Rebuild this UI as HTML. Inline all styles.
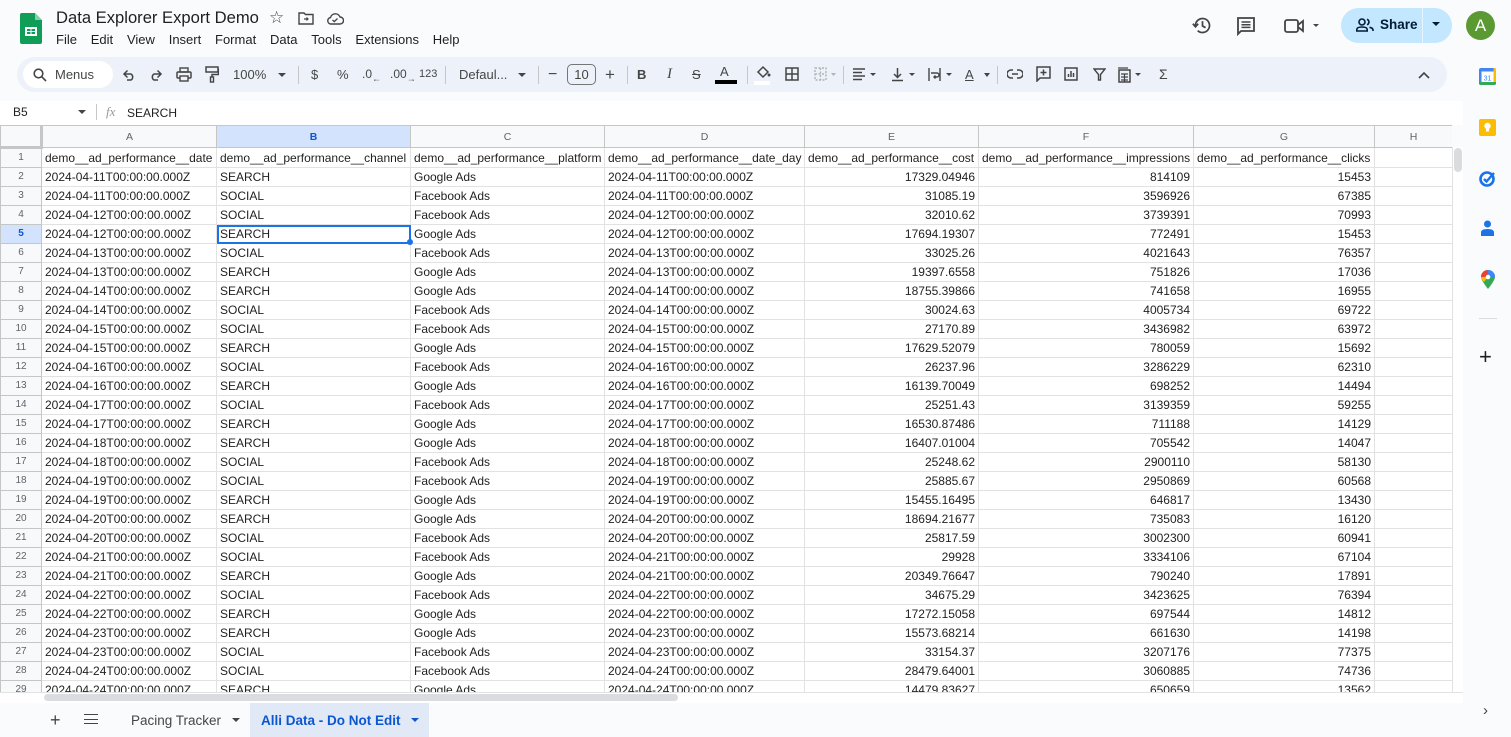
<!DOCTYPE html>
<html><head><meta charset="utf-8"><style>
*{box-sizing:border-box;margin:0;padding:0}
body{width:1511px;height:737px;overflow:hidden;background:#f9fbfd;font-family:"Liberation Sans",Arial,sans-serif;color:#1f1f1f;position:relative}
.abs{position:absolute}
.menu span{margin-right:13.8px}
.tb{position:absolute;left:17px;top:57px;width:1430px;height:35px;background:#edf2fa;border-radius:18px}
.ic{position:absolute;top:0;height:35px;line-height:35px;font-size:13px;color:#444746}
.sep{position:absolute;top:9px;width:1px;height:18px;background:#c7c7c7}
#grid{position:absolute;left:0;top:125px;width:1452px;height:567px;overflow:hidden;background:#fff}
table{border-collapse:collapse;table-layout:fixed;width:1452px;font-size:12px}
td{height:19px;border:1px solid #e2e2e2;padding:0 3px;white-space:nowrap;overflow:hidden;line-height:18px}
td.r{text-align:right}
td.h{background:#f8f9fa;color:#5f6368;text-align:center;font-size:10px;border-color:#c4c7c5;padding:0}
tr.ch td{height:22px;background:#f8f9fa;color:#5f6368;text-align:center;font-size:10.5px;border-color:#c4c7c5}
</style></head><body>
<svg class="abs" style="left:20px;top:13px" width="22" height="31" viewBox="0 0 22 31"><path d="M0 2Q0 0 2 0H15L22 7V29Q22 31 20 31H2Q0 31 0 29Z" fill="#0f9d58"/><path d="M15 0V7H22Z" fill="#87ceac"/><rect x="5" y="14" width="12" height="9" fill="#fff"/><rect x="7" y="16" width="3.5" height="2" fill="#0f9d58"/><rect x="11.5" y="16" width="3.5" height="2" fill="#0f9d58"/><rect x="7" y="19" width="3.5" height="2" fill="#0f9d58"/><rect x="11.5" y="19" width="3.5" height="2" fill="#0f9d58"/></svg>
<div class="abs" style="left:56px;top:8px;font-size:16.6px;color:#1f1f1f">Data Explorer Export Demo</div>
<div class="abs" style="left:269px;top:8px;font-size:17px;color:#444">☆</div>
<svg class="abs" style="left:298px;top:12px" width="16" height="13" viewBox="0 0 16 13"><path d="M1 1H6L7.5 2.5H15V12H1Z" fill="none" stroke="#444" stroke-width="1.4"/><path d="M6 7H10M8.5 5.5L10 7 8.5 8.5" stroke="#444" stroke-width="1.2" fill="none"/></svg>
<svg class="abs" style="left:326px;top:12px" width="18" height="13" viewBox="0 0 18 13"><path d="M4.5 12H14A3.5 3.5 0 0 0 14 5 5 5 0 0 0 4.5 5.5 3.3 3.3 0 0 0 4.5 12Z" fill="none" stroke="#444" stroke-width="1.4"/><path d="M6.5 8L8.3 9.6 11.5 6.5" stroke="#444" stroke-width="1.3" fill="none"/></svg>
<div class="abs menu" style="left:56px;top:32px;font-size:13px;color:#1f1f1f"><span>File</span><span>Edit</span><span>View</span><span>Insert</span><span>Format</span><span>Data</span><span>Tools</span><span>Extensions</span><span>Help</span></div>
<svg class="abs" style="left:1192px;top:15px" width="21" height="21" viewBox="0 0 24 24"><path d="M4 12A8 8 0 1 1 6.5 17.8" fill="none" stroke="#444" stroke-width="2"/><path d="M1 10L4 13.5 7 10" fill="none" stroke="#444" stroke-width="2"/><path d="M12 7V12.5L15.5 14.5" fill="none" stroke="#444" stroke-width="2"/></svg>
<svg class="abs" style="left:1236px;top:16px" width="20" height="20" viewBox="0 0 20 20"><path d="M2 2H18V15H5L2 18Z" fill="none" stroke="#444" stroke-width="1.8"/><path d="M5.5 6H14.5M5.5 8.7H14.5M5.5 11.4H14.5" stroke="#444" stroke-width="1.5"/></svg>
<svg class="abs" style="left:1284px;top:17px" width="40" height="18" viewBox="0 0 40 18"><rect x="1" y="3" width="13" height="12" rx="2" fill="none" stroke="#444" stroke-width="1.8"/><path d="M14 8L19 4V14L14 10" fill="none" stroke="#444" stroke-width="1.8"/><path d="M29 7H35L32 10Z" fill="#444"/></svg>
<div class="abs" style="left:1341px;top:8px;width:111px;height:35px;border-radius:18px;background:#c2e7ff"></div>
<div class="abs" style="left:1422px;top:8px;width:1px;height:35px;background:#e6f4ff"></div>
<svg class="abs" style="left:1356px;top:18px" width="18" height="14" viewBox="0 0 18 14"><circle cx="6" cy="4" r="3" fill="none" stroke="#001d35" stroke-width="1.6"/><path d="M0.8 13V11.5Q0.8 9 6 9 11.2 9 11.2 11.5V13Z" fill="none" stroke="#001d35" stroke-width="1.6"/><path d="M11 1.2A3 3 0 0 1 11 6.8M13.5 9.3Q17 10 17 12V13" fill="none" stroke="#001d35" stroke-width="1.6"/></svg>
<div class="abs" style="left:1380px;top:17px;font-size:13.5px;font-weight:bold;color:#001d35">Share</div>
<div class="abs" style="left:1432px;top:22px;width:0;height:0;border-left:4px solid transparent;border-right:4px solid transparent;border-top:4px solid #001d35"></div>
<div class="abs" style="left:1466px;top:11px;width:29px;height:29px;border-radius:50%;background:#5b9a32;color:#fff;text-align:center;line-height:29px;font-size:17px">A</div>
<div class="tb">
<div class="abs" style="left:6px;top:4px;width:90px;height:27px;background:#fff;border-radius:14px"></div>
<svg class="abs" style="left:16px;top:11px" width="14" height="14" viewBox="0 0 14 14"><circle cx="5.5" cy="5.5" r="4.3" fill="none" stroke="#444" stroke-width="1.6"/><path d="M8.7 8.7L13 13" stroke="#444" stroke-width="1.6"/></svg>
<div class="ic" style="left:38px;color:#444746">Menus</div>
<svg class="abs" style="left:105px;top:12px" width="14" height="12" viewBox="0 0 14 12"><path d="M3 5H9A3.5 3.5 0 0 1 9 11H5M5.5 1.5L2 5 5.5 8.5" fill="none" stroke="#444" stroke-width="1.5"/></svg>
<svg class="abs" style="left:132px;top:12px" width="14" height="12" viewBox="0 0 14 12"><path d="M11 5H5A3.5 3.5 0 0 0 5 11H9M8.5 1.5L12 5 8.5 8.5" fill="none" stroke="#444" stroke-width="1.5"/></svg>
<svg class="abs" style="left:159px;top:10px" width="16" height="15" viewBox="0 0 16 15"><rect x="1" y="5" width="14" height="6" rx="1" fill="none" stroke="#444" stroke-width="1.5"/><rect x="4" y="1" width="8" height="4" fill="none" stroke="#444" stroke-width="1.4"/><rect x="4" y="9" width="8" height="5" fill="#edf2fa" stroke="#444" stroke-width="1.4"/></svg>
<svg class="abs" style="left:188px;top:9px" width="14" height="17" viewBox="0 0 14 17"><rect x="1" y="1" width="12" height="5" fill="none" stroke="#444" stroke-width="1.5"/><path d="M13 3.5H13.5V8.5H7V11" fill="none" stroke="#444" stroke-width="1.5"/><rect x="5.5" y="11" width="3" height="5" fill="none" stroke="#444" stroke-width="1.4"/></svg>
<div class="ic" style="left:216px">100%</div>
<div class="abs" style="left:261px;top:16px;border-left:4px solid transparent;border-right:4px solid transparent;border-top:4px solid #444"></div>
<div class="sep" style="left:281px"></div>
<div class="ic" style="left:294px">$</div>
<div class="ic" style="left:320px">%</div>
<div class="ic" style="left:345px;font-size:12px">.0<sub style="font-size:9px">←</sub></div>
<div class="ic" style="left:373px;font-size:12px">.00<sub style="font-size:9px">→</sub></div>
<div class="ic" style="left:402px;font-size:11px">123</div>
<div class="sep" style="left:428px"></div>
<div class="ic" style="left:442px">Defaul...</div>
<div class="abs" style="left:501px;top:16px;border-left:4px solid transparent;border-right:4px solid transparent;border-top:4px solid #444"></div>
<div class="sep" style="left:521px"></div>
<div class="ic" style="left:531px;font-size:16px">−</div>
<div class="abs" style="left:550px;top:7px;width:29px;height:21px;border:1px solid #747775;border-radius:5px;text-align:center;line-height:19px;font-size:13px;color:#444">10</div>
<div class="ic" style="left:588px;font-size:17px">+</div>
<div class="sep" style="left:610px"></div>
<div class="ic" style="left:620px;font-weight:bold">B</div>
<div class="ic" style="left:650px;font-style:italic;font-family:'Liberation Serif',serif;font-size:15px">I</div>
<div class="ic" style="left:675px;text-decoration:line-through">S</div>
<div class="ic" style="left:703px;top:-3px">A</div>
<div class="abs" style="left:698px;top:23px;width:22px;height:4px;background:#000"></div>
<div class="sep" style="left:730px"></div>
<svg class="abs" style="left:738px;top:8px" width="16" height="14" viewBox="0 0 16 14"><path d="M3 7L8 2 13 7 8 12Z" fill="none" stroke="#444" stroke-width="1.5"/><circle cx="14" cy="10" r="1.5" fill="#444"/></svg>
<div class="abs" style="left:737px;top:24px;width:16px;height:4px;background:#fff"></div>
<svg class="abs" style="left:768px;top:10px" width="14" height="14" viewBox="0 0 14 14"><rect x="1" y="1" width="12" height="12" fill="none" stroke="#444" stroke-width="1.5"/><path d="M7 1V13M1 7H13" stroke="#444" stroke-width="1.5"/></svg>
<svg class="abs" style="left:797px;top:10px" width="24" height="14" viewBox="0 0 24 14"><path d="M1 1H12V13H1ZM6.5 1V13M1 7H12" fill="none" stroke="#b0b3b8" stroke-width="1.4" stroke-dasharray="2 1.5"/><path d="M17 6H22L19.5 9Z" fill="#b0b3b8"/></svg>
<div class="sep" style="left:826px"></div>
<svg class="abs" style="left:835px;top:11px" width="30" height="14" viewBox="0 0 30 14"><path d="M1 1H13M1 4.5H10M1 8H13M1 11.5H10" stroke="#444" stroke-width="1.5"/><path d="M18 5H24L21 8Z" fill="#444"/></svg>
<svg class="abs" style="left:874px;top:10px" width="30" height="15" viewBox="0 0 30 15"><path d="M6.5 1V10M3 7L6.5 10.5 10 7M1 13.5H12" fill="none" stroke="#444" stroke-width="1.5"/><path d="M18 6H24L21 9Z" fill="#444"/></svg>
<svg class="abs" style="left:911px;top:10px" width="30" height="15" viewBox="0 0 30 15"><path d="M1 1V14M12 1V14M3 6H9A2 2 0 0 1 9 10H6M7.5 8.5L6 10 7.5 11.5" fill="none" stroke="#444" stroke-width="1.4"/><path d="M18 6H24L21 9Z" fill="#444"/></svg>
<div class="ic" style="left:948px;text-decoration:underline">A</div>
<div class="abs" style="left:967px;top:16px;border-left:3px solid transparent;border-right:3px solid transparent;border-top:4px solid #444"></div>
<div class="sep" style="left:980px"></div>
<svg class="abs" style="left:990px;top:12px" width="16" height="10" viewBox="0 0 16 10"><path d="M6 1H4A4 4 0 0 0 4 9H6M10 1H12A4 4 0 0 1 12 9H10M5 5H11" fill="none" stroke="#444" stroke-width="1.5"/></svg>
<svg class="abs" style="left:1019px;top:9px" width="15" height="16" viewBox="0 0 15 16"><path d="M1 1H14V12H4L1 15Z" fill="none" stroke="#444" stroke-width="1.5"/><path d="M7.5 3.5V9.5M4.5 6.5H10.5" stroke="#444" stroke-width="1.5"/></svg>
<svg class="abs" style="left:1047px;top:10px" width="14" height="14" viewBox="0 0 14 14"><rect x="1" y="1" width="12" height="12" fill="none" stroke="#444" stroke-width="1.5"/><path d="M4.5 10V7M7 10V4M9.5 10V6" stroke="#444" stroke-width="1.5"/></svg>
<svg class="abs" style="left:1076px;top:11px" width="13" height="13" viewBox="0 0 13 13"><path d="M1 1H12L7.5 6.5V12H5.5V6.5Z" fill="none" stroke="#444" stroke-width="1.4"/></svg>
<svg class="abs" style="left:1100px;top:10px" width="30" height="16" viewBox="0 0 30 16"><rect x="2" y="3" width="11" height="12" fill="none" stroke="#444" stroke-width="1.5"/><path d="M1 1H11M4 7H11M4 10H11M4 13H11M7.5 7V15" stroke="#444" stroke-width="1.2"/><path d="M18 6H24L21 9Z" fill="#444"/></svg>
<div class="ic" style="left:1142px;font-size:14px">Σ</div>
<svg class="abs" style="left:1401px;top:14px" width="12" height="8" viewBox="0 0 12 8"><path d="M1 7L6 2 11 7" fill="none" stroke="#444" stroke-width="1.6"/></svg>
</div>
<div class="abs" style="left:0;top:101px;width:1463px;height:24px;background:#fff"></div>
<div class="abs" style="left:13px;top:105px;font-size:12px">B5</div>
<div class="abs" style="left:78px;top:110px;border-left:4px solid transparent;border-right:4px solid transparent;border-top:4px solid #444"></div>
<div class="abs" style="left:96px;top:104px;width:1px;height:16px;background:#c7c7c7"></div>
<div class="abs" style="left:106px;top:104px;font-size:13px;font-style:italic;font-family:'Liberation Serif',serif;color:#999">fx</div>
<div class="abs" style="left:127px;top:106px;font-size:12px">SEARCH</div>
<div id="grid">
<table>
<colgroup><col style="width:41px"><col style="width:175px"><col style="width:194px"><col style="width:194px"><col style="width:200px"><col style="width:174px"><col style="width:215px"><col style="width:181px"><col style="width:78px"></colgroup>
<tr class="ch"><td style="border-right:3px solid #c4c7c5;border-bottom:3px solid #c4c7c5"></td><td>A</td><td style="background:#d3e3fd;color:#0b57d0;font-weight:bold">B</td><td>C</td><td>D</td><td>E</td><td>F</td><td>G</td><td>H</td></tr>
<tr><td class="h">1</td><td>demo__ad_performance__date</td><td>demo__ad_performance__channel</td><td>demo__ad_performance__platform</td><td>demo__ad_performance__date_day</td><td>demo__ad_performance__cost</td><td>demo__ad_performance__impressions</td><td>demo__ad_performance__clicks</td><td></td></tr>
<tr><td class="h">2</td><td>2024-04-11T00:00:00.000Z</td><td>SEARCH</td><td>Google Ads</td><td>2024-04-11T00:00:00.000Z</td><td class="r">17329.04946</td><td class="r">814109</td><td class="r">15453</td><td></td></tr>
<tr><td class="h">3</td><td>2024-04-11T00:00:00.000Z</td><td>SOCIAL</td><td>Facebook Ads</td><td>2024-04-11T00:00:00.000Z</td><td class="r">31085.19</td><td class="r">3596926</td><td class="r">67385</td><td></td></tr>
<tr><td class="h">4</td><td>2024-04-12T00:00:00.000Z</td><td>SOCIAL</td><td>Facebook Ads</td><td>2024-04-12T00:00:00.000Z</td><td class="r">32010.62</td><td class="r">3739391</td><td class="r">70993</td><td></td></tr>
<tr><td class="h" style="background:#d3e3fd;color:#0b57d0;font-weight:bold">5</td><td>2024-04-12T00:00:00.000Z</td><td style="outline:2px solid #1a73e8;outline-offset:-2px">SEARCH</td><td>Google Ads</td><td>2024-04-12T00:00:00.000Z</td><td class="r">17694.19307</td><td class="r">772491</td><td class="r">15453</td><td></td></tr>
<tr><td class="h">6</td><td>2024-04-13T00:00:00.000Z</td><td>SOCIAL</td><td>Facebook Ads</td><td>2024-04-13T00:00:00.000Z</td><td class="r">33025.26</td><td class="r">4021643</td><td class="r">76357</td><td></td></tr>
<tr><td class="h">7</td><td>2024-04-13T00:00:00.000Z</td><td>SEARCH</td><td>Google Ads</td><td>2024-04-13T00:00:00.000Z</td><td class="r">19397.6558</td><td class="r">751826</td><td class="r">17036</td><td></td></tr>
<tr><td class="h">8</td><td>2024-04-14T00:00:00.000Z</td><td>SEARCH</td><td>Google Ads</td><td>2024-04-14T00:00:00.000Z</td><td class="r">18755.39866</td><td class="r">741658</td><td class="r">16955</td><td></td></tr>
<tr><td class="h">9</td><td>2024-04-14T00:00:00.000Z</td><td>SOCIAL</td><td>Facebook Ads</td><td>2024-04-14T00:00:00.000Z</td><td class="r">30024.63</td><td class="r">4005734</td><td class="r">69722</td><td></td></tr>
<tr><td class="h">10</td><td>2024-04-15T00:00:00.000Z</td><td>SOCIAL</td><td>Facebook Ads</td><td>2024-04-15T00:00:00.000Z</td><td class="r">27170.89</td><td class="r">3436982</td><td class="r">63972</td><td></td></tr>
<tr><td class="h">11</td><td>2024-04-15T00:00:00.000Z</td><td>SEARCH</td><td>Google Ads</td><td>2024-04-15T00:00:00.000Z</td><td class="r">17629.52079</td><td class="r">780059</td><td class="r">15692</td><td></td></tr>
<tr><td class="h">12</td><td>2024-04-16T00:00:00.000Z</td><td>SOCIAL</td><td>Facebook Ads</td><td>2024-04-16T00:00:00.000Z</td><td class="r">26237.96</td><td class="r">3286229</td><td class="r">62310</td><td></td></tr>
<tr><td class="h">13</td><td>2024-04-16T00:00:00.000Z</td><td>SEARCH</td><td>Google Ads</td><td>2024-04-16T00:00:00.000Z</td><td class="r">16139.70049</td><td class="r">698252</td><td class="r">14494</td><td></td></tr>
<tr><td class="h">14</td><td>2024-04-17T00:00:00.000Z</td><td>SOCIAL</td><td>Facebook Ads</td><td>2024-04-17T00:00:00.000Z</td><td class="r">25251.43</td><td class="r">3139359</td><td class="r">59255</td><td></td></tr>
<tr><td class="h">15</td><td>2024-04-17T00:00:00.000Z</td><td>SEARCH</td><td>Google Ads</td><td>2024-04-17T00:00:00.000Z</td><td class="r">16530.87486</td><td class="r">711188</td><td class="r">14129</td><td></td></tr>
<tr><td class="h">16</td><td>2024-04-18T00:00:00.000Z</td><td>SEARCH</td><td>Google Ads</td><td>2024-04-18T00:00:00.000Z</td><td class="r">16407.01004</td><td class="r">705542</td><td class="r">14047</td><td></td></tr>
<tr><td class="h">17</td><td>2024-04-18T00:00:00.000Z</td><td>SOCIAL</td><td>Facebook Ads</td><td>2024-04-18T00:00:00.000Z</td><td class="r">25248.62</td><td class="r">2900110</td><td class="r">58130</td><td></td></tr>
<tr><td class="h">18</td><td>2024-04-19T00:00:00.000Z</td><td>SOCIAL</td><td>Facebook Ads</td><td>2024-04-19T00:00:00.000Z</td><td class="r">25885.67</td><td class="r">2950869</td><td class="r">60568</td><td></td></tr>
<tr><td class="h">19</td><td>2024-04-19T00:00:00.000Z</td><td>SEARCH</td><td>Google Ads</td><td>2024-04-19T00:00:00.000Z</td><td class="r">15455.16495</td><td class="r">646817</td><td class="r">13430</td><td></td></tr>
<tr><td class="h">20</td><td>2024-04-20T00:00:00.000Z</td><td>SEARCH</td><td>Google Ads</td><td>2024-04-20T00:00:00.000Z</td><td class="r">18694.21677</td><td class="r">735083</td><td class="r">16120</td><td></td></tr>
<tr><td class="h">21</td><td>2024-04-20T00:00:00.000Z</td><td>SOCIAL</td><td>Facebook Ads</td><td>2024-04-20T00:00:00.000Z</td><td class="r">25817.59</td><td class="r">3002300</td><td class="r">60941</td><td></td></tr>
<tr><td class="h">22</td><td>2024-04-21T00:00:00.000Z</td><td>SOCIAL</td><td>Facebook Ads</td><td>2024-04-21T00:00:00.000Z</td><td class="r">29928</td><td class="r">3334106</td><td class="r">67104</td><td></td></tr>
<tr><td class="h">23</td><td>2024-04-21T00:00:00.000Z</td><td>SEARCH</td><td>Google Ads</td><td>2024-04-21T00:00:00.000Z</td><td class="r">20349.76647</td><td class="r">790240</td><td class="r">17891</td><td></td></tr>
<tr><td class="h">24</td><td>2024-04-22T00:00:00.000Z</td><td>SOCIAL</td><td>Facebook Ads</td><td>2024-04-22T00:00:00.000Z</td><td class="r">34675.29</td><td class="r">3423625</td><td class="r">76394</td><td></td></tr>
<tr><td class="h">25</td><td>2024-04-22T00:00:00.000Z</td><td>SEARCH</td><td>Google Ads</td><td>2024-04-22T00:00:00.000Z</td><td class="r">17272.15058</td><td class="r">697544</td><td class="r">14812</td><td></td></tr>
<tr><td class="h">26</td><td>2024-04-23T00:00:00.000Z</td><td>SEARCH</td><td>Google Ads</td><td>2024-04-23T00:00:00.000Z</td><td class="r">15573.68214</td><td class="r">661630</td><td class="r">14198</td><td></td></tr>
<tr><td class="h">27</td><td>2024-04-23T00:00:00.000Z</td><td>SOCIAL</td><td>Facebook Ads</td><td>2024-04-23T00:00:00.000Z</td><td class="r">33154.37</td><td class="r">3207176</td><td class="r">77375</td><td></td></tr>
<tr><td class="h">28</td><td>2024-04-24T00:00:00.000Z</td><td>SOCIAL</td><td>Facebook Ads</td><td>2024-04-24T00:00:00.000Z</td><td class="r">28479.64001</td><td class="r">3060885</td><td class="r">74736</td><td></td></tr>
<tr><td class="h">29</td><td>2024-04-24T00:00:00.000Z</td><td>SEARCH</td><td>Google Ads</td><td>2024-04-24T00:00:00.000Z</td><td class="r">14479.83627</td><td class="r">650659</td><td class="r">13562</td><td></td></tr>
</table>
</div>
<div class="abs" style="left:407px;top:239px;width:6px;height:6px;border-radius:50%;background:#1a73e8"></div>
<div class="abs" style="left:1452px;top:147px;width:11px;height:545px;background:#fff;border-left:1px solid #e2e2e2"></div>
<div class="abs" style="left:1454px;top:148px;width:8px;height:24px;border-radius:4px;background:#dadce0"></div>
<div class="abs" style="left:0;top:692px;width:1463px;height:11px;background:#fff;border-top:1px solid #e2e2e2"></div>
<div class="abs" style="left:44px;top:694px;width:634px;height:7px;border-radius:4px;background:#dadce0"></div>
<div class="abs" style="left:50px;top:710px;font-size:18px;color:#444">+</div>
<div class="abs" style="left:84px;top:714px;width:14px;height:10px;border-top:1.5px solid #444;border-bottom:1.5px solid #444"></div>
<div class="abs" style="left:84px;top:718.5px;width:14px;height:1.5px;background:#444"></div>
<div class="abs" style="left:131px;top:713px;font-size:13.5px;color:#444746">Pacing Tracker</div>
<div class="abs" style="left:232px;top:718px;border-left:4px solid transparent;border-right:4px solid transparent;border-top:4px solid #444"></div>
<div class="abs" style="left:250px;top:703px;width:179px;height:34px;background:#e1e9f7"></div>
<div class="abs" style="left:261px;top:713px;font-size:13.5px;font-weight:bold;color:#0b57d0">Alli Data - Do Not Edit</div>
<div class="abs" style="left:411px;top:718px;border-left:4px solid transparent;border-right:4px solid transparent;border-top:4px solid #0b57d0"></div>
<div class="abs" style="left:1483px;top:702px;font-size:15px;color:#444">›</div>
<svg class="abs" style="left:1479px;top:68px" width="17" height="17" viewBox="0 0 17 17"><rect x="0" y="0" width="17" height="17" rx="2" fill="#4285f4"/><rect x="2.5" y="3.5" width="12" height="11" fill="#fff"/><path d="M0 14H17V15Q17 17 15 17H2Q0 17 0 15Z" fill="#34a853"/><path d="M14.5 0H15Q17 0 17 2V14H14.5Z" fill="#fbbc04"/><text x="8.5" y="12.5" font-size="7" text-anchor="middle" fill="#4285f4" font-family="Liberation Sans">31</text></svg>
<svg class="abs" style="left:1479px;top:119px" width="17" height="17" viewBox="0 0 17 17"><rect width="17" height="17" rx="2" fill="#fbbc04"/><circle cx="8.5" cy="7" r="3.2" fill="#fff"/><rect x="7" y="10" width="3" height="2.5" fill="#fff"/></svg>
<svg class="abs" style="left:1479px;top:170px" width="17" height="17" viewBox="0 0 17 17"><circle cx="8" cy="9" r="6.5" fill="none" stroke="#1a73e8" stroke-width="2.6"/><path d="M5 9L7.5 11.5 15 3" fill="none" stroke="#1a73e8" stroke-width="2.4"/></svg>
<svg class="abs" style="left:1481px;top:220px" width="13" height="16" viewBox="0 0 13 16"><circle cx="6.5" cy="4" r="3.5" fill="#1a73e8"/><path d="M0 16V12.5Q0 9 6.5 9 13 9 13 12.5V16Z" fill="#1a73e8"/></svg>
<svg class="abs" style="left:1481px;top:270px" width="14" height="19" viewBox="0 0 14 19"><path d="M7 19Q0 10 0 7A7 7 0 0 1 14 7Q14 10 7 19Z" fill="#34a853"/><path d="M0 7A7 7 0 0 1 7 0V7Z" fill="#ea4335"/><path d="M7 0A7 7 0 0 1 14 7H7Z" fill="#4285f4"/><path d="M0 7H7L3 12Q0 9 0 7Z" fill="#fbbc04"/><circle cx="7" cy="7" r="2.3" fill="#fff"/></svg>
<div class="abs" style="left:1479px;top:318px;width:18px;height:1px;background:#dadce0"></div>
<div class="abs" style="left:1479px;top:345px;font-size:22px;color:#1f1f1f;line-height:24px">+</div>
</body></html>
